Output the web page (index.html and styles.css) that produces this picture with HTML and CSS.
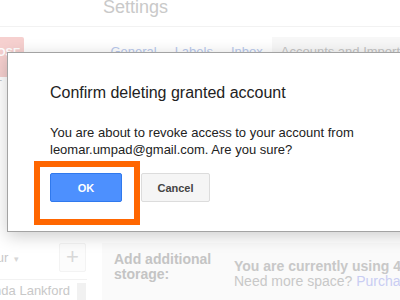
FILE: index.html
```html
<!DOCTYPE html>
<html lang="en">
<head>
    <meta charset="UTF-8">
    <meta name="viewport" content="width=device-width, initial-scale=1.0">
    <title>Settings</title>
    <link rel="stylesheet" href="styles.css">
</head>
<body>
    <div class="page">
        <!-- Faded settings page behind the dialog -->
        <div class="top-bar">
            <div class="page-title">Settings</div>
        </div>
        <div class="tab-row">
            <div class="compose">COMPOSE</div>
            <div class="tabs">
                <span class="tab">General</span>
                <span class="tab">Labels</span>
                <span class="tab">Inbox</span>
                <span class="tab active">Accounts and Import</span>
            </div>
        </div>
        <div class="side-count">1</div>
        <div class="lower">
            <div class="side">
                <div class="side-head">
                    <span class="side-label">Your <span class="caret">&#9662;</span></span>
                    <span class="plus">+</span>
                </div>
                <div class="contact">
                    <span>Linda Lankford</span>
                    <span class="scroll"></span>
                </div>
            </div>
            <div class="storage">
                <div class="storage-label">Add additional storage:</div>
                <div class="storage-info">
                    <div class="using">You are currently using 4.5 GB</div>
                    <div>Need more space? <span class="link">Purchase additional storage</span></div>
                </div>
            </div>
        </div>

        <!-- Confirm dialog -->
        <div class="dialog">
            <div class="dialog-title">Confirm deleting granted account</div>
            <div class="dialog-text">You are about to revoke access to your account from leomar.umpad@gmail.com. Are you sure?</div>
            <div class="dialog-buttons">
                <button class="btn btn-ok">OK</button>
                <button class="btn btn-cancel">Cancel</button>
            </div>
        </div>
        <div class="highlight"></div>
    </div>
</body>
</html>
```

FILE: styles.css
```css
body {
    margin: 0;
    font-family: Arial, "Liberation Sans", sans-serif;
    background: #fff;
}
.page {
    position: relative;
    width: 400px;
    height: 300px;
    overflow: hidden;
}
.top-bar {
    height: 29px;
    border-bottom: 1px solid #f2f2f2;
}
.page-title {
    padding-left: 103px;
    margin-top: -3px;
    font-size: 18px;
    line-height: 20px;
    color: #c9c9c9;
}
.tab-row {
    display: flex;
    margin-top: 10px;
    height: 40px;
}
.compose {
    width: 45px;
    height: 40px;
    margin-left: -20px;
    padding-left: 20px;
    box-sizing: border-box;
    background: #f6d0cf;
    border-radius: 2px;
    color: #fff;
    font-size: 11px;
    font-weight: bold;
    line-height: 30px;
    overflow: hidden;
    text-indent: -36px;
}
.tabs {
    display: flex;
    margin-left: 86px;
    font-size: 13px;
}
.tab {
    color: #b8c8ec;
    padding: 7px 0 0;
    margin-right: 18px;
}
.tab.active {
    color: #c4c4c4;
    background: #f7f7f7;
    margin-left: -9px;
    padding-left: 9px;
    margin-right: 0;
    white-space: nowrap;
}
.side-count {
    height: 0;
    margin-top: -8px;
    margin-left: -5px;
    font-size: 13px;
    color: #c8c8c8;
}
.lower {
    display: flex;
    margin-top: 171px;
}
.side {
    width: 87px;
    flex-shrink: 0;
}
.side-head {
    display: flex;
    align-items: center;
    justify-content: space-between;
    height: 31px;
    margin-top: 2px;
    margin-left: -18px;
    border-bottom: 1px solid #f2f2f2;
    padding-bottom: 6px;
}
.side-label {
    font-size: 13px;
    color: #c8c8c8;
}
.caret {
    font-size: 9px;
    color: #d6d6d6;
    margin-left: 2px;
}
.plus {
    width: 27px;
    height: 29px;
    box-sizing: border-box;
    border: 1px solid #f3f3f3;
    border-radius: 2px;
    background: #fcfcfc;
    color: #d8d8d8;
    font-size: 22px;
    line-height: 25px;
    text-align: center;
    margin-right: 1px;
}
.contact {
    display: flex;
    justify-content: space-between;
    margin-left: -16px;
    padding-top: 3px;
    font-size: 13px;
    color: #c8c8c8;
    white-space: nowrap;
}
.scroll {
    width: 9px;
    height: 20px;
    background: #f1f1f1;
    flex-shrink: 0;
    margin-right: 1px;
}
.storage {
    display: flex;
    flex: 1;
    margin-left: 15px;
    margin-top: 3px;
    padding: 9px 0 0 12px;
    background: #fafafa;
    font-size: 13px;
    color: #c8c8c8;
    white-space: nowrap;
}
.storage-label {
    width: 120px;
    font-weight: bold;
    white-space: normal;
    line-height: 15px;
    font-size: 14px;
    color: #c4c4c4;
}
.storage-info {
    padding-top: 7px;
    line-height: 15px;
    font-size: 14px;
}
.using {
    font-weight: bold;
}
.link {
    color: #c9cdf3;
}
.dialog {
    position: absolute;
    left: 7px;
    top: 52px;
    width: 420px;
    height: 180px;
    background: #fff;
    border: 1px solid #a3a3a3;
    box-shadow: 0 4px 16px rgba(0, 0, 0, 0.2);
    padding: 31px 0 0 42px;
    box-sizing: border-box;
}
.dialog-title {
    font-size: 16px;
    line-height: 18px;
    color: #222;
}
.dialog-text {
    width: 330px;
    margin-top: 22px;
    font-size: 13px;
    line-height: 17px;
    color: #222;
}
.dialog-buttons {
    display: flex;
    gap: 19px;
    margin-top: 15px;
}
.btn {
    height: 29px;
    border-radius: 2px;
    font-family: Arial, "Liberation Sans", sans-serif;
    font-size: 11px;
    font-weight: bold;
    padding: 0;
}
.btn-ok {
    width: 72px;
    background: #4d90fe;
    border: 1px solid #3079ed;
    color: #fff;
}
.btn-cancel {
    width: 69px;
    background: #f5f5f5;
    border: 1px solid #dcdcdc;
    color: #444;
}
.highlight {
    position: absolute;
    left: 34px;
    top: 161px;
    width: 106px;
    height: 64px;
    box-sizing: border-box;
    border: 6px solid #ff6600;
}
```
